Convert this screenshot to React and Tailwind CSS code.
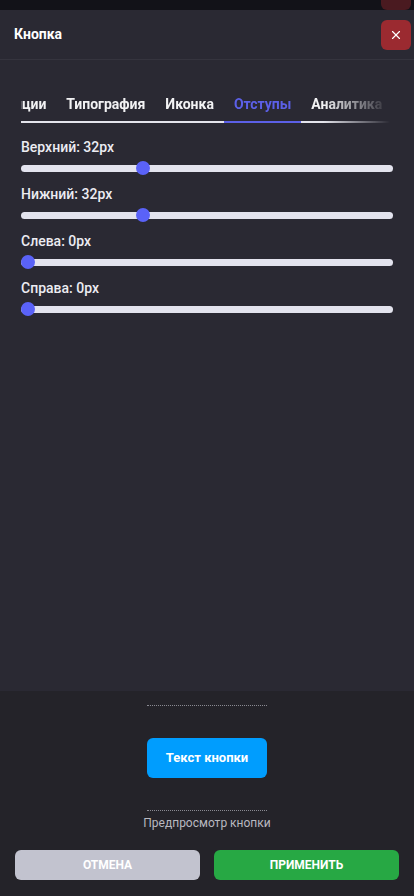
import { X } from 'lucide-react';

const tabs = ['Позиции', 'Типография', 'Иконка', 'Отступы', 'Аналитика'];

const sliders = [
    { label: 'Верхний', value: 32 },
    { label: 'Нижний', value: 32 },
    { label: 'Слева', value: 0 },
    { label: 'Справа', value: 0 },
];

function Slider({ label, value }) {
    return (
        <div className="flex flex-col">
            <span className="text-[14px] leading-[18px] font-medium text-[#ececf2]">{label}: {value}px</span>
            <div className="relative mt-[5px] h-[14px] flex items-center">
                <div className="w-full h-[7px] rounded-full bg-[#e3e3ee]" />
                {/* thumb */}
                <div
                    className="absolute top-0 w-[14px] h-[14px] rounded-full bg-[#5a62f8]"
                    style={{ left: `calc((100% - 14px) * ${value / 100})` }}
                />
            </div>
        </div>
    );
}

export default function App() {
    return (
        <div className="w-[414px] h-[896px] bg-[#121218] flex flex-col font-['Roboto',sans-serif] overflow-hidden">
            {/* page behind the sheet */}
            <div className="h-[10px] shrink-0 relative">
                <div className="absolute right-[3px] top-[-20px] w-[30px] h-[30px] rounded-md bg-[#4a1a20]" />
            </div>

            <div className="flex-1 flex flex-col bg-[#2a2933]">
                {/* header */}
                <div className="h-[50px] shrink-0 flex items-center justify-between pl-[14px] pr-[3px] border-b border-[#35343e]">
                    <h2 className="text-[14px] font-bold text-white">Кнопка</h2>
                    <button className="w-[30px] h-[30px] rounded-md bg-[#9b2a30] flex items-center justify-center text-white">
                        <X size={14} strokeWidth={2} />
                    </button>
                </div>

                {/* tabs, scrolled to the active one */}
                <div className="mt-[34px] mx-[21px] w-[369px] overflow-hidden [mask-image:linear-gradient(to_right,black_82%,transparent)]">
                    <div className="flex ml-[-42px] w-max">
                        {tabs.map((t) => (
                            <div
                                key={t}
                                className={`px-[10px] pb-[7px] text-[14px] leading-[20px] font-bold border-b-2 ${
                                    t === 'Отступы' ? 'text-[#5c60e8] border-[#5c60e8]' : 'text-[#f2f2f4] border-[#e4e4ec]'
                                }`}
                            >
                                {t}
                            </div>
                        ))}
                    </div>
                </div>

                {/* spacing sliders */}
                <div className="mt-[15px] px-[21px] flex flex-col gap-[10px]">
                    {sliders.map((s) => (
                        <Slider key={s.label} {...s} />
                    ))}
                </div>
            </div>

            {/* preview + actions */}
            <div className="h-[205px] shrink-0 bg-[#242329] flex flex-col items-center pt-[14px]">
                <div className="w-[120px] h-[106px] border-y border-dotted border-[#8a8a92] flex items-center justify-center">
                    <button className="w-[120px] h-[40px] rounded-md bg-[#009dfe] text-white text-[13px] font-bold">
                        Текст кнопки
                    </button>
                </div>
                <span className="mt-[4px] text-[12px] leading-[16px] text-[#b9b9c0]">Предпросмотр кнопки</span>
                <div className="mt-[19px] w-full px-[15px] grid grid-cols-2 gap-[14px]">
                    <button className="h-[30px] rounded-md bg-[#c2c3cf] text-white text-[12px] font-bold uppercase">
                        Отмена
                    </button>
                    <button className="h-[30px] rounded-md bg-[#27a844] text-white text-[12px] font-bold uppercase">
                        Применить
                    </button>
                </div>
            </div>
        </div>
    );
}
